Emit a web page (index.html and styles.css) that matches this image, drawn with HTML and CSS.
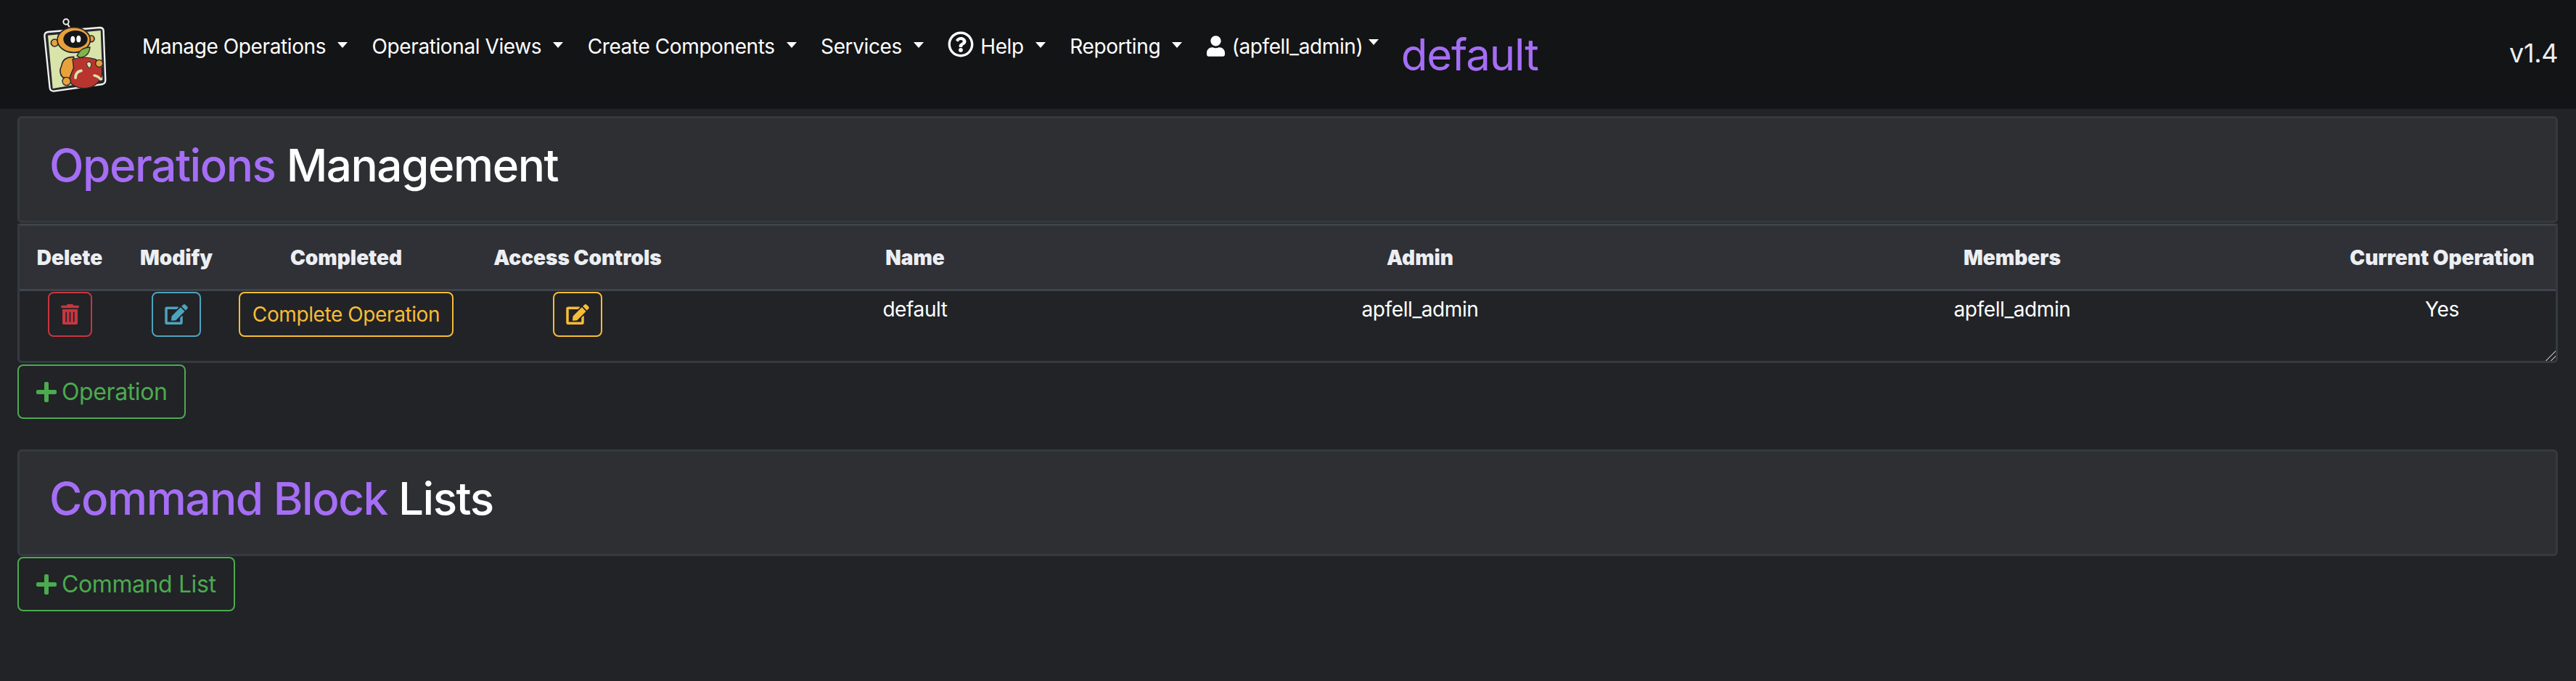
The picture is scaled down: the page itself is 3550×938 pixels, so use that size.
FILE: index.html
```html
<!DOCTYPE html>
<html lang="en">
<head>
  <meta charset="UTF-8" />
  <title>Operations Management</title>
  <link rel="stylesheet" href="styles.css">
</head>
<body>
  <svg class="defs" aria-hidden="true">
    <symbol id="i-caret-edit" viewBox="0 0 576 512"><path d="M402.6 83.2l90.2 90.2c3.8 3.8 3.8 10 0 13.8L274.4 405.6l-92.8 10.3c-12.4 1.4-22.9-9.1-21.5-21.5l10.3-92.8L388.8 83.2c3.8-3.8 10-3.8 13.8 0zm162-22.9l-48.8-48.8c-15.2-15.2-39.9-15.2-55.2 0l-35.4 35.4c-3.8 3.8-3.8 10 0 13.8l90.2 90.2c3.8 3.8 10 3.8 13.8 0l35.4-35.4c15.2-15.3 15.2-40 0-55.2zM384 346.2V448H64V128h229.8c3.2 0 6.2-1.3 8.5-3.5l40-40c7.6-7.6 2.2-20.5-8.5-20.5H48C21.5 64 0 85.5 0 112v352c0 26.5 21.5 48 48 48h352c26.5 0 48-21.5 48-48V306.2c0-10.7-12.9-16-20.5-8.5l-40 40c-2.2 2.3-3.5 5.3-3.5 8.5z"/></symbol>
    <symbol id="i-trash" viewBox="0 0 448 512"><path d="M32 464a48 48 0 0 0 48 48h288a48 48 0 0 0 48-48V128H32zm272-256a16 16 0 0 1 32 0v224a16 16 0 0 1-32 0zm-96 0a16 16 0 0 1 32 0v224a16 16 0 0 1-32 0zm-96 0a16 16 0 0 1 32 0v224a16 16 0 0 1-32 0zM432 32H312l-9.4-18.7A24 24 0 0 0 281.1 0H166.8a23.72 23.72 0 0 0-21.4 13.3L136 32H16A16 16 0 0 0 0 48v32a16 16 0 0 0 16 16h416a16 16 0 0 0 16-16V48a16 16 0 0 0-16-16z"/></symbol>
    <symbol id="i-plus" viewBox="0 0 448 512"><path d="M416 208H272V64c0-17.67-14.33-32-32-32h-32c-17.67 0-32 14.33-32 32v144H32c-17.67 0-32 14.33-32 32v32c0 17.67 14.33 32 32 32h144v144c0 17.67 14.33 32 32 32h32c17.67 0 32-14.33 32-32V304h144c17.67 0 32-14.33 32-32v-32c0-17.67-14.33-32-32-32z"/></symbol>
  </svg>

  <nav class="navbar">
    <svg class="logo" viewBox="0 0 420 360" aria-label="logo">
      <circle cx="183" cy="60" r="11" fill="none" stroke="#f2f2f2" stroke-width="6"/>
      <path d="M190 70 L203 92" stroke="#f2f2f2" stroke-width="6"/>
      <path d="M94 118 Q94 104 108 102 L322 84 Q338 84 338 98 L346 300 Q346 314 334 318 L132 347 Q118 346 116 334 Z" fill="#26262a" stroke="#f2f2f2" stroke-width="7"/>
      <path d="M108 116 L326 96 L334 300 L128 336 Z" fill="#d9e4ab"/>
      <circle cx="136" cy="147" r="15" fill="#e9a13b" stroke="#26262a" stroke-width="5"/>
      <circle cx="287" cy="130" r="13" fill="#e9a13b" stroke="#26262a" stroke-width="5"/>
      <ellipse cx="215" cy="135" rx="68" ry="52" fill="#e9a13b" stroke="#26262a" stroke-width="5"/>
      <ellipse cx="222" cy="132" rx="50" ry="36" fill="#17171a"/>
      <ellipse cx="211" cy="133" rx="9" ry="14" fill="#fff"/>
      <ellipse cx="235" cy="131" rx="9" ry="14" fill="#fff"/>
      <path d="M165 240 Q170 205 215 205 L215 300 L170 290 Q150 270 165 240 Z" fill="#e9a13b" stroke="#26262a" stroke-width="5"/>
      <path d="M210 215 Q260 200 305 215 Q340 240 330 285 Q310 335 255 335 Q205 330 195 300 Q205 270 215 250 Z" fill="#b8352f" stroke="#26262a" stroke-width="4"/>
      <path d="M228 200 Q245 165 282 165 Q278 205 240 208 Z" fill="#7fb54a" stroke="#26262a" stroke-width="4"/>
      <path d="M268 232 Q280 218 288 234 L284 250 Q272 252 268 232 Z" fill="#d9e4ab" stroke="#26262a" stroke-width="3"/>
      <path d="M222 292 Q222 266 246 262" fill="none" stroke="#d9e4ab" stroke-width="11" stroke-linecap="round"/>
      <path d="M300 282 Q316 284 326 298" fill="none" stroke="#d9e4ab" stroke-width="10" stroke-linecap="round"/>
      <circle cx="320" cy="232" r="15" fill="#e9a13b" stroke="#26262a" stroke-width="4"/>
      <circle cx="185" cy="306" r="17" fill="#e9a13b" stroke="#26262a" stroke-width="4"/>
    </svg>

    <ul class="nav-list">
      <li><a class="nav-link">Manage Operations</a></li>
      <li><a class="nav-link">Operational Views</a></li>
      <li><a class="nav-link">Create Components</a></li>
      <li><a class="nav-link">Services</a></li>
      <li><a class="nav-link"><svg class="help-icon" viewBox="0 0 512 512"><path d="M256 8C119 8 8 119.043 8 256c0 136.995 111 248 248 248s248-111.005 248-248C504 119.043 393 8 256 8zm0 448c-110.532 0-200-89.451-200-200 0-110.495 89.472-200 200-200 110.491 0 200 89.471 200 200 0 110.53-89.431 200-200 200zm107.244-255.2c0 67.052-72.421 68.084-72.421 92.863V300c0 6.627-5.373 12-12 12h-45.647c-6.627 0-12-5.373-12-12v-8.659c0-35.745 27.1-50.034 47.579-61.516 17.561-9.845 28.324-16.541 28.324-29.579 0-17.246-21.999-28.693-39.784-28.693-23.189 0-33.894 10.977-48.942 29.969-4.057 5.12-11.46 6.071-16.666 2.124l-27.824-21.098c-5.107-3.872-6.251-11.066-2.644-16.363C184.846 131.491 214.94 112 261.794 112c49.071 0 101.45 38.304 101.45 88.8zM298 368c0 23.159-18.841 42-42 42s-42-18.841-42-42 18.841-42 42-42 42 18.841 42 42z"/></svg>Help</a></li>
      <li><a class="nav-link">Reporting</a></li>
      <li><a class="nav-link user-link"><svg class="user-icon" viewBox="0 0 448 512"><path d="M224 256c70.7 0 128-57.3 128-128S294.7 0 224 0 96 57.3 96 128s57.3 128 128 128zm89.6 32h-16.7c-22.2 10.2-46.9 16-72.9 16s-50.6-5.8-72.9-16h-16.7C60.2 288 0 348.2 0 422.4V464c0 26.5 21.5 48 48 48h352c26.5 0 48-21.5 48-48v-41.6c0-74.2-60.2-134.4-134.4-134.4z"/></svg>(apfell_admin)</a></li>
    </ul>
    <span class="current-op">default</span>
    <span class="version">v1.4</span>
  </nav>

  <main class="content">
    <section class="panel">
      <h2><span class="accent">Operations</span> Management</h2>
    </section>
    <div class="table-wrap">
      <table class="ops-table">
        <colgroup>
          <col class="w-delete"><col class="w-modify"><col class="w-completed"><col class="w-access">
          <col class="w-name"><col class="w-admin"><col class="w-members"><col class="w-current">
        </colgroup>
        <thead>
          <tr>
            <th class="first">Delete</th>
            <th>Modify</th>
            <th>Completed</th>
            <th>Access Controls</th>
            <th>Name</th>
            <th>Admin</th>
            <th>Members</th>
            <th>Current Operation</th>
          </tr>
        </thead>
        <tbody>
          <tr>
            <td class="first cell-btn"><button class="btn btn-red btn-icon"><svg class="trash"><use href="#i-trash"/></svg></button></td>
            <td class="cell-btn"><button class="btn btn-teal btn-icon"><svg class="edit"><use href="#i-caret-edit"/></svg></button></td>
            <td class="cell-btn"><button class="btn btn-yellow">Complete Operation</button></td>
            <td class="cell-btn"><button class="btn btn-yellow btn-icon"><svg class="edit"><use href="#i-caret-edit"/></svg></button></td>
            <td>default</td>
            <td>apfell_admin</td>
            <td>apfell_admin</td>
            <td>Yes</td>
          </tr>
        </tbody>
      </table>
    </div>
    <button class="btn-add"><svg class="plus"><use href="#i-plus"/></svg>Operation</button>

    <section class="panel panel-second">
      <h2><span class="accent">Command Block</span> Lists</h2>
    </section>
    <button class="btn-add btn-add-second"><svg class="plus"><use href="#i-plus"/></svg>Command List</button>
  </main>
</body>
</html>
```

FILE: styles.css
```css
* {
  box-sizing: border-box;
}
html, body {
  height: 100%;
}
body {
  margin: 0;
  font-family: Inter, "Liberation Sans", sans-serif;
  font-size: 28px;
  line-height: 42px;
  letter-spacing: -0.4px;
  color: #fff;
  background-color: #212327;
  overflow: hidden;
}
.defs {
  display: none;
}

/* top bar */
.navbar {
  display: flex;
  align-items: flex-start;
  height: 150px;
  padding: 10px 25px 0 30px;
  background-color: #131416;
}
.logo {
  width: 140px;
  height: 120px;
  flex-shrink: 0;
}
.nav-list {
  display: flex;
  margin: 17px 0 0 10px;
  padding: 0;
  list-style: none;
}
.nav-link {
  display: flex;
  align-items: center;
  height: 74px;
  padding: 0 16.75px 0 16px;
  margin-right: 0.75px;
  white-space: nowrap;
}
.nav-link::after {
  content: "";
  margin-left: 16px;
  border-top: 8px solid #fff;
  border-left: 7.5px solid transparent;
  border-right: 7.5px solid transparent;
  position: relative;
  top: -2px;
}
.user-link::after {
  margin-left: 8px;
  top: -6px;
}
.help-icon {
  width: 36px;
  height: 36px;
  margin-right: 9px;
  fill: #fff;
  position: relative;
  top: -3px;
}
.user-icon {
  width: 25px;
  height: 29px;
  margin-right: 10px;
  fill: #fff;
  position: relative;
  top: -1px;
}
.current-op {
  margin: 30px 0 0 13px;
  font-size: 60px;
  line-height: 70px;
  letter-spacing: -1.2px;
  color: #a56ef5;
}
.version {
  margin: 41px 0 0 auto;
  font-size: 36px;
  line-height: 44px;
  color: #eceef0;
}

/* page body */
.content {
  padding: 10px 25px 0 24px;
}
.panel {
  height: 147px;
  padding: 27px 41px 0;
  background-color: #2d2f33;
  border: 3px solid #343a40;
  border-radius: 6px;
}
.panel h2 {
  margin: 0;
  font-size: 62px;
  line-height: 76px;
  font-weight: 500;
  letter-spacing: -1.45px;
}
.accent {
  color: #a56ef5;
}
.panel-second {
  margin-top: 42px;
}

/* operations table */
.table-wrap {
  height: 192px;
  margin-top: 1px;
  overflow: auto;
  resize: vertical;
  border: 3px solid #343a40;
  border-top: 0;
  border-radius: 0 0 6px 6px;
}
.table-wrap::-webkit-resizer {
  background: linear-gradient(135deg, transparent 50%, #9a9a9a 50%, #9a9a9a 58%, transparent 58%, transparent 75%, #9a9a9a 75%, #9a9a9a 83%, transparent 83%);
}
.ops-table {
  width: 3498px;
  table-layout: fixed;
  border-collapse: collapse;
}
.w-delete { width: 149px; }
.w-modify { width: 134px; }
.w-completed { width: 334px; }
.w-access { width: 304px; }
.w-name { width: 626px; }
.w-admin { width: 766px; }
.w-members { width: 866px; }
.w-current { width: 319px; }
.ops-table th {
  height: 90px;
  padding: 0;
  text-align: center;
  font-weight: 900;
  letter-spacing: 0;
  color: #eceef2;
  white-space: nowrap;
  background-color: #303136;
  border-top: 3px solid #3e444b;
  border-bottom: 3px solid #3e444b;
}
.ops-table td {
  padding: 4px 0 0;
  text-align: center;
  vertical-align: top;
}
.ops-table .cell-btn {
  padding-top: 1px;
}
.ops-table .first {
  padding-right: 11px;
}
.btn {
  display: inline-flex;
  align-items: center;
  justify-content: center;
  vertical-align: top;
  height: 62px;
  padding: 0 17px;
  font: inherit;
  letter-spacing: -0.4px;
  background: transparent;
  border: 2px solid;
  border-radius: 8px;
}
.btn-icon {
  width: 68px;
  padding: 0;
}
.btn-red {
  width: 61px;
  color: #c8363f;
}
.btn-teal {
  color: #4ea3bd;
}
.btn-yellow {
  color: #f7bc36;
}
.trash {
  width: 25px;
  height: 28px;
  fill: currentColor;
}
.edit {
  width: 32px;
  height: 28px;
  fill: currentColor;
}
.btn-add {
  display: flex;
  align-items: center;
  height: 75px;
  margin-top: 2px;
  padding: 0 24px;
  font-family: inherit;
  font-size: 32px;
  letter-spacing: -0.4px;
  color: #4caa4f;
  background: transparent;
  border: 2px solid #4caa4f;
  border-radius: 8px;
}
.btn-add-second {
  margin-top: 1px;
}
.plus {
  width: 28px;
  height: 32px;
  margin-right: 7px;
  fill: currentColor;
}
```
